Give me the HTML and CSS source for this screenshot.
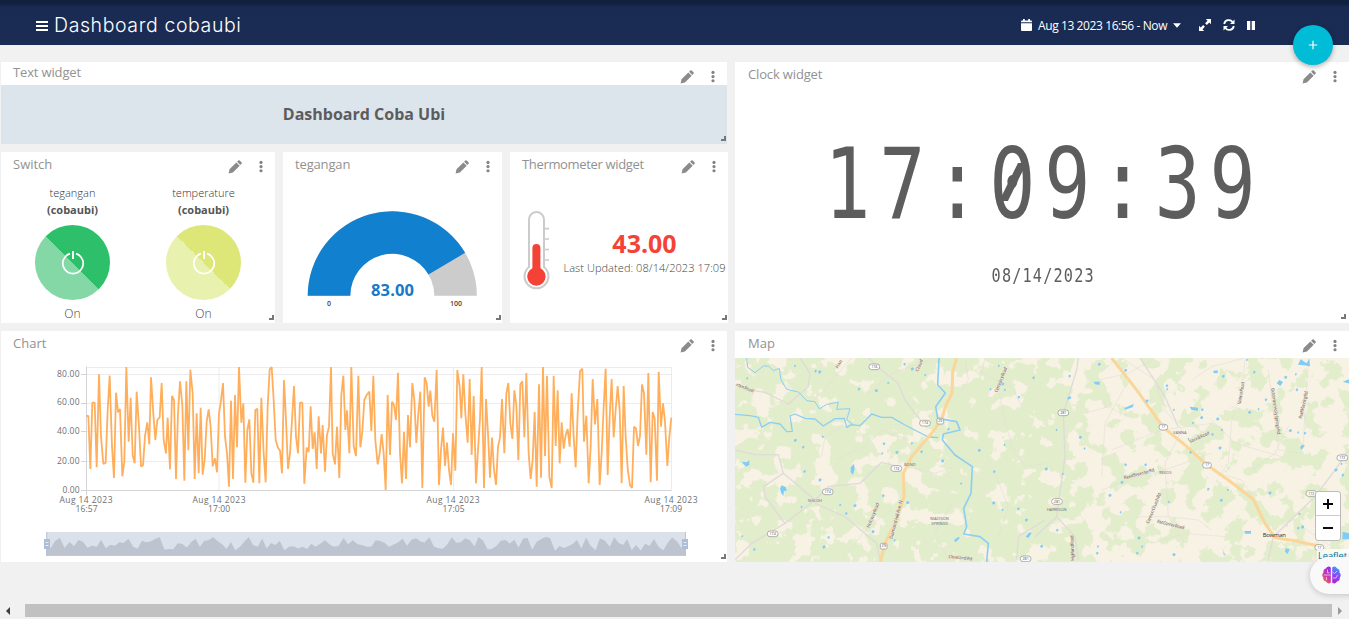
FILE: index.html
```html
<!DOCTYPE html>
<html lang="en">
<head>
<meta charset="utf-8">
<title>Dashboard cobaubi</title>
<link rel="stylesheet" href="styles.css">
</head>
<body>
<svg class="defs" width="0" height="0">
  <symbol id="pencil" viewBox="0 0 14 14"><path d="M.6 13.4l.9-4.200 6.800-6.800 3.400 3.400-6.800 6.800zM9.100 1.700l1.200-1.200q.7-.6 1.400 0l1.800 1.800q.6.700 0 1.400l-1.200 1.200z"/></symbol>
  <symbol id="dots" viewBox="0 0 4 14"><circle cx="2" cy="2.600" r="1.700"/><circle cx="2" cy="7.100" r="1.700"/><circle cx="2" cy="11.600" r="1.700"/></symbol>
</svg>
<header class="topbar">
  <svg class="burger" width="12" height="12" viewBox="0 0 12 12"><path d="M0 2h12M0 6h12M0 10h12" stroke="#fff" stroke-width="1.9"/></svg>
  <h1>Dashboard cobaubi</h1>
  <div class="tools">
    <svg width="11" height="12" viewBox="0 0 11 12"><path fill="#fff" d="M0 3.2V2.4Q0 1.4 1 1.4H2V0h1.8v1.4h3.4V0H9v1.4h1q1 0 1 1v.8zM0 4.2h11V11q0 1-1 1H1q-1 0-1-1z"/></svg>
    <span class="range">Aug 13 2023 16:56 - Now</span>
    <svg class="caret" width="8" height="5" viewBox="0 0 8 5"><path fill="#fff" d="M0 .3h8L4 4.8z"/></svg>
    <svg class="expand" width="12" height="12" viewBox="0 0 12 12"><path fill="#fff" d="M6.8 0H12v5.2l-1.7-1.7-2.5 2.4-1.7-1.7 2.4-2.5zM0 6.8l1.7 1.7 2.5-2.4 1.7 1.7-2.4 2.5L5.2 12H0z"/></svg>
    <svg class="sync" width="12" height="12" viewBox="0 0 12 12"><path d="M1.2 5A4.7 4.7 0 0 1 9.6 3M10.8 7A4.7 4.7 0 0 1 2.4 9" fill="none" stroke="#fff" stroke-width="1.8"/><path fill="#fff" d="M11.5.5V5H7zM.5 11.5V7H5z"/></svg>
    <svg class="pause" width="8" height="9" viewBox="0 0 8 9"><path fill="#fff" d="M0 0h3.3v9H0zM4.7 0H8v9H4.7z"/></svg>
  </div>
</header>
<button class="fab"><svg width="10" height="10" viewBox="0 0 10 10"><path d="M5 .8v8.4M.8 5h8.4" stroke="#fff" stroke-width="1.2"/></svg></button>

<main class="board">
  <div class="left">
    <section class="card text-card">
      <div class="head"><h2 class="snug">Text widget</h2><svg class="pen"><use href="#pencil"/></svg><svg class="more"><use href="#dots"/></svg></div>
      <div class="banner">Dashboard Coba Ubi</div><i class="grip"></i>
    </section>
    <div class="trio">
      <section class="card">
        <div class="head"><h2>Switch</h2><svg class="pen"><use href="#pencil"/></svg><svg class="more"><use href="#dots"/></svg></div>
        <div class="switches">
          <div class="switch green"><span>tegangan</span><b>(cobaubi)</b><div class="knob"><svg width="24" height="26" viewBox="0 0 24 26"><path d="M9 3.600A10.200 10.200 0 1 0 15 3.600" fill="none" stroke="#fff" stroke-width="1.700"/><path d="M12 1v8" stroke="#fff" stroke-width="1.900"/></svg></div><em>On</em></div>
          <div class="switch lime"><span>temperature</span><b>(cobaubi)</b><div class="knob"><svg width="24" height="26" viewBox="0 0 24 26"><path d="M9 3.600A10.200 10.200 0 1 0 15 3.600" fill="none" stroke="#fff" stroke-width="1.700"/><path d="M12 1v8" stroke="#fff" stroke-width="1.900"/></svg></div><em>On</em></div>
        </div><i class="grip"></i>
      </section>
      <section class="card">
        <div class="head"><h2 class="snug">tegangan</h2><svg class="pen"><use href="#pencil"/></svg><svg class="more"><use href="#dots"/></svg></div>
        <svg width="218" height="145" viewBox="283 178 218 145" class="gauge">
          <path d="M307.7 295.8A84.6 84.6 0 0 1 476.9 295.8H434.3A42 42 0 0 0 350.3 295.8z" fill="#ccc"/>
          <path d="M307.7 295.8A84.6 84.6 0 0 1 465.1 252.8L428.5 274.5A42 42 0 0 0 350.3 295.8z" fill="#1180ce"/>
          <text x="392.5" y="296" class="big" textLength="43">83.00</text>
          <text x="329" y="306">0</text><text x="456" y="306">100</text>
        </svg><i class="grip"></i>
      </section>
      <section class="card">
        <div class="head"><h2 class="tight">Thermometer widget</h2><svg class="pen"><use href="#pencil"/></svg><svg class="more"><use href="#dots"/></svg></div>
        <div class="thermo">
          <svg width="32" height="82" viewBox="521 209 32 82">
            <path d="M529 267V219.500a7.500 7.500 0 0 1 15 0V267a12 12 0 1 1-15 0z" fill="#fff" stroke="#ccc" stroke-width="2"/>
            <path d="M545 228.700h4M545 239h4M545 249.500h4M545 260h4" stroke="#ccc" stroke-width="1.700"/>
            <path d="M536.400 248v25" stroke="#f44336" stroke-width="8" stroke-linecap="round"/><circle cx="536.400" cy="276.500" r="9.200" fill="#f44336"/>
          </svg>
          <div class="reading"><strong>43.00</strong><span>Last Updated: 08/14/2023 17:09</span></div>
        </div><i class="grip"></i>
      </section>
    </div>
    <section class="card chart-card">
      <div class="head"><h2>Chart</h2><svg class="pen"><use href="#pencil"/></svg><svg class="more"><use href="#dots"/></svg></div>
      <svg class="chart" width="726" height="204" viewBox="1 358 726 204">
        <path d="M86.500 374.500H671.500M86.500 403.500H671.500M86.500 431.500H671.500M86.500 461.500H671.500M86.500 367.500H671.500M219 367V490M453.500 367V490M671.500 367V490" stroke="#ececf0" fill="none"/>
        <path d="M86.500 366.500V495M81 374.500h5M81 403.500h5M81 431.500h5M81 461.500h5M81 490.500H671.500" stroke="#d2d4d7" fill="none"/>
        <g class="ylab"><text x="79.500" y="376.600" textLength="22.500">80.00</text><text x="79.500" y="405" textLength="22.500">60.00</text><text x="79.500" y="434" textLength="22.500">40.00</text><text x="79.500" y="463.500" textLength="22.500">20.00</text><text x="79.500" y="492.500" textLength="17">0.00</text></g>
        <g class="xlab"><text x="86" y="502.800" textLength="53">Aug 14 2023</text><text x="86.500" y="511.500" textLength="22">16:57</text><text x="219" y="502.800" textLength="53">Aug 14 2023</text><text x="219" y="511.500" textLength="22">17:00</text><text x="453" y="502.800" textLength="53">Aug 14 2023</text><text x="453.500" y="511.500" textLength="22">17:05</text><text x="671" y="502.800" textLength="53">Aug 14 2023</text><text x="671" y="511.500" textLength="22">17:09</text></g>
        <polyline id="series" fill="none" stroke="#ffaf5c" stroke-width="1.800" stroke-linejoin="bevel"/>
        <rect x="46" y="532" width="640" height="23.500" fill="#dbe1eb"/>
        <path id="mini" fill="#bdc4cf"/>
        <path d="M46 555.500H686" stroke="#c3c9d4"/>
        <path d="M46.800 532v24M685.500 532v24" stroke="#b7c4da"/>
        <path d="M44 539h6v10h-6zM682 539h6v10h-6z" fill="#acbdd5"/>
        <path d="M45.500 542.500h3M45.500 545.500h3M683.500 542.500h3M683.500 545.500h3" stroke="#e5ebf3"/>
      </svg><i class="grip"></i>
    </section>
  </div>
  <div class="right">
    <section class="card clock-card">
      <div class="head"><h2 class="snug">Clock widget</h2><svg class="pen"><use href="#pencil"/></svg><svg class="more"><use href="#dots"/></svg></div>
      <div class="clock"><div class="time">17:<span class="zero">0</span>9:39</div><div class="date">08/14/2023</div></div><i class="grip"></i>
    </section>
    <section class="card map-card">
      <div class="head"><h2>Map</h2><svg class="pen"><use href="#pencil"/></svg><svg class="more"><use href="#dots"/></svg></div>
      <svg class="map" width="614" height="204" viewBox="0 84 1842 612">
        <defs>
          <filter id="woods" filterUnits="userSpaceOnUse" x="0" y="84" width="1842" height="612" color-interpolation-filters="sRGB">
            <feGaussianBlur in="SourceAlpha" stdDeviation="26" result="d"/>
            <feTurbulence type="fractalNoise" baseFrequency=".017" numOctaves="4" seed="8"/>
            <feColorMatrix values="0 0 0 0 0 0 0 0 0 0 0 0 0 0 0 1 0 0 0 0" result="n"/>
            <feComposite in="d" in2="n" operator="arithmetic" k2=".4" k3="1" k4="-.2"/>
            <feComponentTransfer result="m"><feFuncA type="linear" slope="22" intercept="-11"/></feComponentTransfer>
            <feFlood flood-color="#e1edcb"/><feComposite in2="m" operator="in"/>
          </filter>
        </defs>
        <rect y="84" width="1842" height="612" fill="#f7f2e4"/>
        <g filter="url(#woods)">
          <rect x="-80" y="0" width="1120" height="780" opacity=".74"/>
          <rect x="1040" y="0" width="900" height="780" opacity=".42"/>
          <path d="M330 84H620V240L450 260 350 200zM620 420L700 330 860 200V690H560zM150 200L480 250 540 330 420 310 280 330 150 280z" opacity=".65"/>
          <path d="M1110 520L1250 540 1200 690H1050zM1370 320L1480 440 1560 520 1480 600 1400 500zM1640 560H1842V690H1620z" opacity=".3"/>
        </g>
        <g class="minor">
          <path d="M195 84L225 130 220 170 160 222 90 187 40 180 0 165M0 360L60 374H130L145 430 240 510M145 430L85 470 90 500 150 580M50 640L150 580 240 510 280 470 375 460 440 397 500 412M50 640L0 690M240 520L330 560 425 640 435 690M400 84L440 120 490 160 510 210 560 275M930 570L850 620 845 690M1030 84L1025 120 985 250 990 380 965 560 1020 620 1030 690M965 560L900 620M1215 84L1290 200 1330 290M1842 360L1800 420 1740 500 1615 620 1600 690"/>
        </g>
        <g class="hair"><path d="M350 84L300 140 240 210M340 240L320 290 270 320 260 380M520 410L600 430 660 410M930 400L870 410 830 350 800 230 790 160M690 84L700 150 670 200M1160 84L1260 150 1290 240 1340 300 1290 400 1300 560 1350 640M1100 480L1210 440 1290 420 1430 370M1170 170L1110 280 1100 440M1530 90L1520 180 1490 270 1480 400 1450 440M1600 120L1630 360 1700 370M1720 100L1710 230 1705 350M1470 435L1520 450 1560 510M1210 560L1300 560 1390 570 1430 600M1370 150L1430 110 1530 84M520 330L440 300 390 350 300 390M600 84L470 130 400 190M320 690L400 590 470 540M640 690L600 610 650 520M750 84L740 130 830 170 860 230M780 430L820 530 790 620M1090 150L1180 130 1250 90M1130 360L1280 300 1430 280M1550 420L1620 370 1660 290M1700 590L1760 630 1820 670M1250 640L1350 610 1470 620M1430 270L1500 340 1640 380M1050 250L1120 230 1180 260"/></g>
        <g class="river">
          <path d="M35 84L38 112 60 128 85 108 100 108 115 122 133 115 138 150 155 178 190 186 215 212 240 215 253 237 275 223 310 217 305 238 345 236 335 270 355 284" stroke-width="3"/>
          <path d="M0 253L45 257 70 262 80 292 105 277 135 282 155 305 172 304 165 258 180 252 210 265 240 267 265 288 300 266 328 265 335 292 350 284 375 287 410 252 440 262 470 262 510 285 545 303 580 321 610 323" stroke-width="4"/>
          <path d="M612 84L608 165 631 189 602 230 608 265 665 275 675 300 625 312 622 330 660 375 712 410 708 490 686 535 695 590 686 612 735 620 760 640 755 696" stroke-width="5"/>
        </g>
        <path class="main" d="M665 84L653 125 651 190 633 225 620 268 590 310 530 380 505 430 507 500 485 570 450 640 436 696M1130 84L1205 180 1285 292 1350 345 1415 404 1480 450 1555 508 1590 580 1620 623 1680 632 1750 648"/>
        <g class="ponds"><path d="M20 395l15 2 8-6 0 14-10 5zM135 475l5-9 12 5 3 12-8 0-2 15-7-10zM347 413l10-12 2 15-5 18-7-7zM657 630l14-10 3 4-12 13zM872 620l12-14 6 3-10 15zM1076 155l18 0 0 10-14-2zM1168 234l28-12-2 9-24 8zM1364 230l25 3 0 9-20-3zM1697 88l18 12 8-15 2 24-18-3-18-2zM1625 160l8-10 11 6-8 12zM1823 155l20-8v14zM1823 605l19 5v18h-20zM1652 655l12 3-6 14-8-7zM1461 650l5 17 4 5-3 5zM1528 603h20v8h-18zM1435 122l13-1 0 9-12-1zM1700 345l10 1-10 13-5-6z"/></g>
        <g id="specks" class="ponds"></g>
        <g class="shields" id="shields"></g>
        <g class="roads">
          <text transform="translate(2 167) rotate(22)" textLength="56">nten Road</text><text transform="translate(308 116) rotate(-58)">Han</text><text transform="translate(550 126) rotate(-68)">Cloud</text>
          <text transform="translate(787 188) rotate(-68)" textLength="80">Cemetery Road</text><text transform="translate(403 595) rotate(-68)" textLength="80">Holloway Road</text><text transform="translate(472 628) rotate(-75)" textLength="120">Diamond Hill Ave. N</text>
          <text transform="translate(640 684) rotate(6)" textLength="72">Cleveland Rd</text><text transform="translate(1018 692) rotate(-92)" textLength="76">Highland Road</text>
          <text transform="translate(1168 448) rotate(-15)" textLength="96">Reed Brewster Rd.</text><text transform="translate(1242 582) rotate(-68)" textLength="100">Cannon Church Rd.</text><text transform="translate(1265 578) rotate(14)" textLength="84">Flat Corner Road</text><text transform="translate(1365 340) rotate(-25)" textLength="66">Vanna Road</text><text transform="translate(1517 223) rotate(-80)" textLength="68">Vanna Road</text>
          <text transform="translate(1608 175) rotate(82)" textLength="142">Goldmine-Holly Springs Rd.</text><text transform="translate(1700 267) rotate(-77)" textLength="86">Ruel Manning Rd.</text>
        </g>
        <g class="places"><text x="507" y="409">BOND</text><text x="218" y="517">SHILOH</text><text x="586" y="571">MADISON</text><text x="589" y="584">SPRINGS</text><text x="935" y="544">HARRISON</text><text x="1314" y="311">VANNA</text><text x="1273" y="433">REEDS</text><text class="town" x="1583" y="622" textLength="70">Bowman</text></g>
      </svg>
      <div class="zoom"><b><svg width="10" height="10" viewBox="0 0 10 10"><path d="M5 0v10M0 5h10" stroke="#000" stroke-width="1.900"/></svg></b><b><svg width="10" height="10" viewBox="0 0 10 10"><path d="M0 5h10" stroke="#000" stroke-width="1.900"/></svg></b></div>
      <div class="credit">Leaflet<span>.</span></div>
    </section>
  </div>
</main>
<div class="assistant"><svg width="19" height="18" viewBox="0 0 19 18">
  <defs><linearGradient id="lb" x1="0" y1="1" x2=".6" y2="0"><stop stop-color="#fb8b24"/><stop offset=".5" stop-color="#d63a9f"/><stop offset="1" stop-color="#9a2bf0"/></linearGradient><linearGradient id="rb" x1=".3" y1="1" x2=".6" y2="0"><stop stop-color="#b51fe0"/><stop offset=".45" stop-color="#8b45ee"/><stop offset="1" stop-color="#38a4fb"/></linearGradient></defs>
  <path fill="url(#lb)" d="M8.800 1.500Q6-.8 3.800 2.600.8 3.500 1.500 6.500-.8 9 1.200 11.600 1 15 4 15.500 6.200 18.800 8.800 16.600z"/><path fill="url(#rb)" d="M10.200 1.500Q13-.8 15.200 2.600 18.200 3.500 17.500 6.500 19.800 9 17.800 11.600 18 15 15 15.500 12.800 18.800 10.200 16.600z"/>
  <path d="M2 9h6.500M5.500 3.500v3.300h2M4.500 14v-3M10.500 6l2 1.500L15 5M11 12h3l1.500-3" fill="none" stroke="#e9d4fb" stroke-width=".8"/></svg></div>
<footer class="scroll"><svg width="5" height="8" viewBox="0 0 5 8"><path d="M5 0v8L1 4z" fill="#404040"/></svg><div class="thumb"></div><svg width="5" height="8" viewBox="0 0 5 8"><path d="M0 0v8l4-4z" fill="#999"/></svg></footer>
<script src="app.js"></script>
</body>
</html>
```
FILE: styles.css
```css
* { box-sizing: border-box; }
body { margin: 0; width: 1349px; height: 619px; overflow: hidden; background: #f1f1f1; font-family: "Open Sans", sans-serif; color: #555; display: flex; flex-direction: column; position: relative; }
svg { display: block; flex: none; }
.defs { position: absolute; }
h1, h2 { margin: 0; }
.topbar { height: 45px; background: linear-gradient(#11203f 0, #12213f 4px, #192b53 7px, #192c54 100%); display: flex; align-items: center; padding: 5px 94px 0 36px; color: #fff; flex: none; }
.burger { margin-top: 2px; }
h1 { font: 300 19.5px/24px Inter, sans-serif; margin-left: 6px; letter-spacing: .6px; white-space: nowrap; }
.tools { margin-left: auto; display: flex; align-items: center; font-size: 12px; }
.range { margin-left: 6px; width: 130px; white-space: nowrap; letter-spacing: -.4px; font-weight: 500; }
.caret { margin-left: 5px; }
.expand { margin-left: 18px; }
.sync { margin-left: 12px; }
.pause { margin-left: 12px; }
.fab { position: absolute; left: 1293px; top: 25px; width: 40px; height: 40px; border: 0; padding: 0; border-radius: 50%; background: #00bcd7; box-shadow: 0 2px 5px rgba(0,0,0,.3); display: flex; align-items: center; justify-content: center; z-index: 3; }
.board { display: grid; grid-template-columns: 727px 614px; gap: 7px; padding: 17px 0 0 1px; height: 517px; flex: none; }
.left, .right { display: flex; flex-direction: column; gap: 8px; }
.card { background: #fff; position: relative; display: flex; flex-direction: column; }
.head { height: 27px; display: flex; padding: 0 12px 0 12px; flex: none; }
.head h2 { font: 400 13px/25px "Open Sans", sans-serif; color: #929292; margin-right: auto; white-space: nowrap; height: 25px; }
.head .snug { letter-spacing: -.15px; }
.head .tight { letter-spacing: -.34px; }
.pen { width: 14px; height: 14px; margin: 8px 17px 0 0; fill: #8b8b8b; }
.more { width: 4px; height: 13px; margin-top: 8px; fill: #828282; }
.text-card { width: 726px; height: 82px; }
.text-card .head { height: 23px; }
.text-card .head h2 { line-height: 21px; }
.banner { background: #dde5ec; flex: 1; font: 700 16px/58px "Open Sans", sans-serif; text-align: center; color: #5c5c5c; }
.trio { display: grid; grid-template-columns: 274px 219px 218px; gap: 8px; height: 171px; }
.trio .head { height: 26px; }
.grip { position: absolute; right: 1px; bottom: 3px; width: 5px; height: 5px; border: solid #777; border-width: 0 2px 2px 0; }
.switches { display: grid; grid-template-columns: 131px 131px; padding: 6px 0 0 6px; }
.switch { display: flex; flex-direction: column; align-items: center; font-size: 11px; line-height: 17px; }
.switch span { font-weight: 300; color: #333; }
.knob { width: 75px; height: 75px; border-radius: 50%; margin: 7px 0 6px; display: flex; align-items: center; justify-content: center; }
.green .knob { background: linear-gradient(45deg, #83d8a5 50%, #2ebf6b 50%); }
.lime .knob { background: linear-gradient(45deg, #e9f1ae 50%, #dde778 50%); }
.switch em { font-style: normal; color: #444; font-size: 12px; line-height: 15px; font-weight: 300; }
.gauge text { font: 600 7px "Open Sans", sans-serif; text-anchor: middle; fill: #444; }
.gauge .big { font: 700 16.5px "Open Sans", sans-serif; fill: #1878c9; }
.thermo { display: flex; padding: 31px 0 0 11px; }
.reading { width: 163px; margin: 19px 0 0 10px; display: flex; flex-direction: column; align-items: center; }
.reading strong { color: #f44336; font-size: 25px; line-height: 30px; }
.reading span { font-size: 11px; font-weight: 300; line-height: 20px; letter-spacing: .07px; white-space: nowrap; color: #444; }
.chart-card { width: 726px; height: 231px; }
.ylab, .xlab { font: 400 8.5px "Open Sans", sans-serif; fill: #6e6f73; }
.ylab { text-anchor: end; }
.xlab { text-anchor: middle; }
.clock-card { height: 261px; }
.clock-card .grip { right: 3px; bottom: 4px; }
.clock { font-family: "DejaVu Sans Mono", monospace; color: #5d5d5d; display: flex; flex-direction: column; align-items: center; }
.time { font-size: 97.4px; line-height: 110px; letter-spacing: 11.2px; transform: scaleX(.788); margin: 41px -60px 0 -55px; white-space: nowrap; }
.zero { position: relative; }
.zero::after { content: ""; position: absolute; left: 24px; top: 35px; width: 11px; height: 38px; background: #5d5d5d; transform: skewX(-32deg); }
.date { font-size: 19.5px; line-height: 24px; letter-spacing: 1.5px; transform: scaleX(.78); margin: 24px 0 0 2px; }
.right .head { padding-left: 13px; }
.map-card { height: 231px; overflow: hidden; }
.minor { fill: none; stroke: #dfdbd9; stroke-width: 4; stroke-linejoin: round; }
.hair { fill: none; stroke: #e5e0d8; stroke-width: 2; }
.river { fill: none; stroke: #8dcff2; stroke-linejoin: round; }
.main { fill: none; stroke: #fad698; stroke-width: 9; stroke-linejoin: round; }
.ponds { fill: #80cbf8; }
.shields rect { fill: #fff; stroke: #8b8b8b; stroke-width: 2; }
.shields text { font: 11px "Open Sans", sans-serif; text-anchor: middle; fill: #444; }
.roads { font: 600 14px "Open Sans", sans-serif; fill: #857468; stroke: #f7f2e4; stroke-width: 2; paint-order: stroke; }
.places { font: 12px "Open Sans", sans-serif; fill: #68687a; }
.places .town { font-size: 18px; fill: #333; }
.zoom { position: absolute; right: 8px; top: 160px; width: 26px; border: 1px solid #bbb; border-radius: 3px; background: #fff; }
.zoom b { height: 24px; display: flex; align-items: center; justify-content: center; }
.zoom b + b { box-shadow: 0 -1px #ccc; }
.credit { position: absolute; right: 0; bottom: 0; width: 32px; height: 13px; background: rgba(255,255,255,.75); font: 9.2px/13px "Open Sans", sans-serif; color: #0078a8; padding-left: 1px; white-space: nowrap; }
.credit span { color: #333; }
.assistant { position: absolute; left: 1310px; top: 557px; width: 60px; height: 37px; border-radius: 19px; background: #f9f9f9; box-shadow: 0 1px 6px rgba(0,0,0,.2); padding: 9px 0 0 12px; }
.scroll { margin-top: auto; height: 17px; display: flex; align-items: center; padding: 0 6px 0 5px; }
.thumb { width: 1307px; height: 13px; background: #c1c1c1; margin: 0 6px 0 15px; flex: none; }
```
FILE: app.js
```javascript
// Samples as x,y pairs at three units per pixel, y measured from 330px.
const samples = `259,258 265,258 271,417 277,218 284,218 290,412 297,133 303,320 310,402 317,398 323,240 329,137 336,350 342,444 348,188 354,247 360,237 367,439 373,395 379,111 386,335 392,203 398,375 404,400 410,185 417,290 423,409 429,406 435,318 442,277 448,343 453,142 460,250 466,330 472,270 479,262 485,159 491,330 498,370 503,263 510,418 516,198 522,210 528,447 534,250 540,154 547,225 553,452 559,154 565,361 571,119 578,190 584,447 590,250 596,430 602,233 608,434 614,390 620,275 626,238 632,290 638,409 645,385 651,427 657,250 662,220 669,159 675,320 681,370 687,470 693,212 699,447 705,195 711,352 717,111 724,278 730,220 736,458 742,300 748,268 754,430 760,458 766,240 772,236 778,460 784,203 791,370 797,457 803,230 809,118 815,111 821,210 827,330 834,353 840,362 846,430 852,150 858,270 864,417 870,370 876,270 882,168 888,320 894,370 900,218 907,218 913,461 920,353 926,366 932,229 938,357 944,307 950,417 956,259 963,370 968,285 975,425 981,315 987,290 993,111 998,370 1005,403 1011,290 1018,444 1024,195 1030,137 1036,300 1041,241 1048,370 1054,111 1061,348 1068,378 1075,137 1081,352 1087,305 1093,210 1100,195 1108,185 1114,303 1120,137 1126,330 1133,403 1139,370 1145,312 1151,370 1157,480 1163,195 1170,375 1176,215 1182,225 1188,270 1194,128 1200,370 1206,460 1212,306 1218,447 1224,255 1230,352 1237,159 1243,210 1249,339 1255,250 1261,185 1267,474 1274,142 1280,160 1286,230 1291,182 1297,257 1303,275 1310,120 1317,465 1323,360 1329,293 1335,408 1341,338 1347,420 1353,465 1359,310 1366,422 1372,120 1379,170 1384,265 1390,133 1396,250 1403,338 1409,147 1415,375 1421,198 1428,460 1434,360 1440,265 1445,111 1452,474 1458,207 1464,310 1470,443 1476,323 1482,420 1488,465 1494,350 1500,323 1506,207 1513,370 1519,190 1525,159 1531,280 1537,327 1543,181 1549,225 1555,391 1561,163 1567,154 1573,322 1579,129 1586,370 1592,447 1598,390 1604,246 1610,470 1617,163 1623,443 1629,111 1635,378 1641,137 1648,440 1655,474 1661,137 1667,348 1673,181 1679,400 1685,277 1691,356 1697,315 1703,297 1709,350 1715,190 1721,320 1727,412 1733,250 1740,124 1747,116 1752,335 1759,257 1766,460 1772,350 1778,147 1785,283 1792,207 1799,465 1805,370 1811,230 1817,116 1823,435 1829,260 1835,147 1841,322 1847,240 1853,168 1859,240 1865,460 1871,168 1877,320 1883,415 1890,466 1896,474 1902,290 1908,295 1914,348 1920,318 1926,163 1932,190 1939,374 1945,129 1952,457 1958,246 1964,265 1971,452 1976,125 1983,290 1989,220 1995,275 2002,408 2008,320 2014,263`.split(' ').map(p => p.split(',').map(Number));
document.getElementById('series').setAttribute('points', samples.map(([x, y]) => `${x / 3},${330 + y / 3}`).join(' '));
let area = 'M46 555.5';
for (let i = 0; i < samples.length; i += 2) {
  const [x, y] = samples[i];
  area += `L${46 + (x - 259) / 1755 * 640} ${537 + (y - 111) / 369 * 14}`;
}
document.getElementById('mini').setAttribute('d', area + 'L686 555.5Z');

const specks = '180,108 242,124 254,127 37,145 372,178 424,183 460,159 509,103 532,118 571,135 205,352 181,332 264,321 209,425 255,451 442,371 447,342 486,368 531,340 560,366 623,394 679,461 445,498 518,519 316,525 334,551 360,528 200,531 281,623 267,652 22,619 58,659 414,606 479,631 641,298 733,362 809,345 778,426 776,520 803,540 850,537 874,571 767,178 852,202 803,163 810,180 896,144 920,650 792,108 1005,204 1093,104 965,300 1001,205 1036,323 1049,356 1004,139 934,418 984,432 967,601 1125,497 1157,547 1172,405 1161,458 1302,516 1232,405 1236,214 1297,178 1296,168 1172,122 1317,240 1402,240 1400,264 1374,279 1390,320 1448,268 1461,300 1433,314 1455,355 1361,327 1367,368 1465,140 1536,90 1558,127 1544,248 1571,238 1593,210 1652,143 1683,133 1686,180 1666,303 1690,308 1710,310 1803,421 1820,402 1824,436 1605,490 1479,480 1420,478 1459,512 1694,552 1690,595 1703,592 1089,650 1087,670 1212,625 1222,650 1207,670 1317,675';
document.getElementById('specks').innerHTML = specks.split(' ').map((p, i) => {
  const [x, y] = p.split(',').map(Number), r = 3 + i % 3;
  return `<path d="M${x - r} ${y - 2}l${r} -${r - 1} ${r} 3 -2 ${r} -${r} 2z"/>`;
}).join('');
document.getElementById('shields').innerHTML = [[418,110,'174'],[570,279,'174'],[616,273,'29'],[484,415,'174'],[278,485,'174'],[113,611,'174'],[446,648,'29'],[872,686,'281'],[985,248,'281'],[966,514,'281'],[1285,291,'17'],[1416,405,'17'],[1729,490,'172'],[1822,383,'172'],[1753,652,'17']].map(([x, y, t]) => {
  const w = t.length > 2 ? 32 : t === '17' ? 26 : 20;
  return `<rect x="${x - w / 2}" y="${y - 8}" width="${w}" height="17" rx="${t === '29' ? 4 : 8}"/><text x="${x}" y="${y + 4}">${t}</text>`;
}).join('');
```
